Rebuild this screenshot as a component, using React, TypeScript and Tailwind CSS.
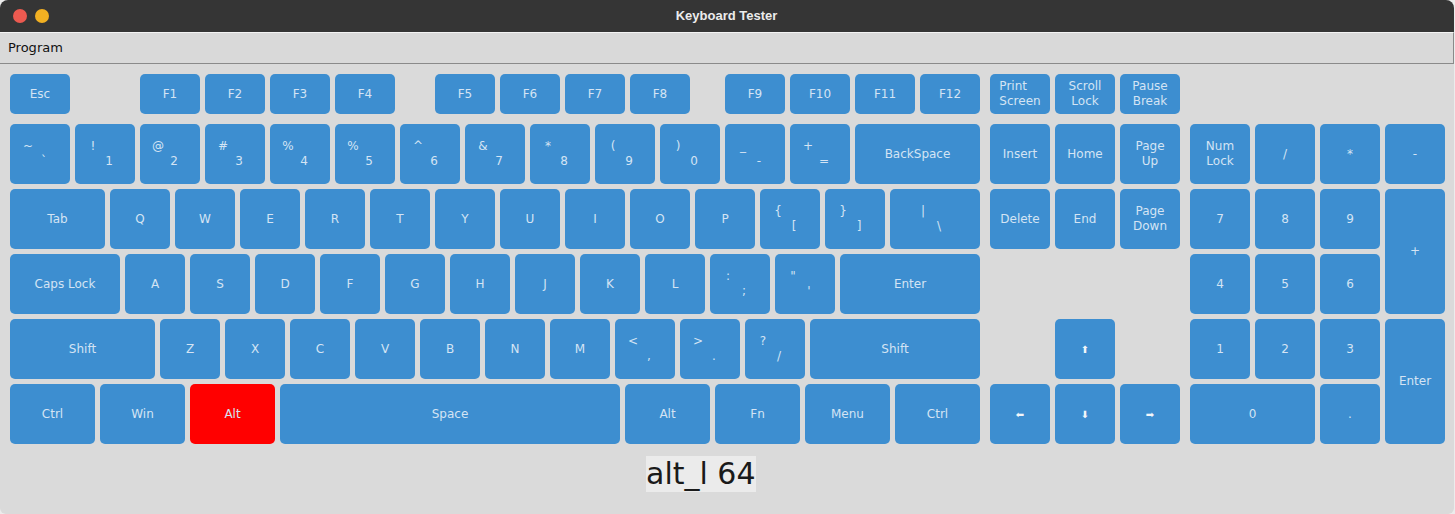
import React from "react";

type KP = { c?: string; red?: boolean; children?: React.ReactNode };

const K = ({ c = "w-[60px] h-[60px]", red, children }: KP) => (
  <div
    className={`${c} ${red ? "bg-[#ff0000]" : "bg-[#3d8ed0]"} shrink-0 rounded-[5px] flex items-center justify-center text-[12px] leading-[15px] text-[#d4e4f4] text-center`}
  >
    {children}
  </div>
);

const D = ({ a, b }: { a: string; b: string }) => (
  <div className="flex flex-col items-center">
    <span className="-translate-x-[12px] whitespace-pre">{a}</span>
    <span className="translate-x-[4px] whitespace-pre">{b}</span>
  </div>
);

const T = ({ a, b, left }: { a: string; b: string; left?: boolean }) => (
  <div className={`flex flex-col ${left ? "items-start" : "items-center"}`}>
    <span>{a}</span>
    <span>{b}</span>
  </div>
);

const Sp = ({ c }: { c: string }) => <div className={`${c} shrink-0`} />;

export default function App() {
  const letters1 = ["Q", "W", "E", "R", "T", "Y", "U", "I", "O", "P"];
  const letters2 = ["A", "S", "D", "F", "G", "H", "J", "K", "L"];
  const letters3 = ["Z", "X", "C", "V", "B", "N", "M"];
  const nums: [string, string][] = [
    ["~", "`"],
    ["!", "1"],
    ["@", "2"],
    ["#", "3"],
    ["%", "4"],
    ["%", "5"],
    ["^", "6"],
    ["&", "7"],
    ["*", "8"],
    ["(", "9"],
    [")", "0"],
    ["_", "-"],
    ["+", "="],
  ];
  return (
    <div className="w-[1455px] h-[514px] bg-[#ececec] font-['DejaVu_Sans',sans-serif] overflow-hidden">
      <div className="w-[1454px] h-[514px] flex flex-col rounded-t-[8px] rounded-b-[6px] overflow-hidden">
        {/* title bar */}
        <div className="h-[32px] bg-[#353535] flex items-center relative shrink-0">
          <div className="flex items-center gap-[8px] pl-[13px]">
            <div className="w-[14px] h-[14px] rounded-full bg-[#ec5a50]" />
            <div className="w-[14px] h-[14px] rounded-full bg-[#f1b022]" />
          </div>
          <div className="flex-1 text-center pr-[50px] font-['Liberation_Sans',sans-serif] font-bold text-[13px] text-[#ececec]">
            Keyboard Tester
          </div>
        </div>
        {/* menu bar */}
        <div className="h-[32px] shrink-0 bg-[#d9d9d9] border-t border-t-[#f4f4f4] border-b border-b-[#8a8a8a] border-r border-r-[#8a8a8a] flex items-center pl-[8px] text-[13px] text-[#111]">
          Program
        </div>
        {/* content */}
        <div className="flex-1 bg-[#dadada] pt-[10px] pl-[10px]">
          {/* function row */}
          <div className="flex gap-[5px] h-[40px]">
            <K c="w-[60px] h-[40px]">Esc</K>
            <Sp c="w-[60px]" />
            {["F1", "F2", "F3", "F4"].map((f) => (
              <K key={f} c="w-[60px] h-[40px]">{f}</K>
            ))}
            <Sp c="w-[30px]" />
            {["F5", "F6", "F7", "F8"].map((f) => (
              <K key={f} c="w-[60px] h-[40px]">{f}</K>
            ))}
            <Sp c="w-[25px]" />
            {["F9", "F10", "F11", "F12"].map((f) => (
              <K key={f} c="w-[60px] h-[40px]">{f}</K>
            ))}
            <Sp c="w-0" />
            <K c="w-[60px] h-[40px]">
              <T a="Print" b="Screen" left />
            </K>
            <K c="w-[60px] h-[40px]">
              <T a="Scroll" b="Lock" />
            </K>
            <K c="w-[60px] h-[40px]">
              <T a="Pause" b="Break" />
            </K>
          </div>

          <div className="flex gap-[10px] mt-[10px]">
            {/* main block */}
            <div className="w-[970px] flex flex-col gap-[5px] shrink-0">
              <div className="flex gap-[5px]">
                {nums.map(([a, b], i) => (
                  <K key={i}>
                    <D a={a} b={b} />
                  </K>
                ))}
                <K c="w-[125px] h-[60px]">BackSpace</K>
              </div>
              <div className="flex gap-[5px]">
                <K c="w-[95px] h-[60px]">Tab</K>
                {letters1.map((l) => (
                  <K key={l}>{l}</K>
                ))}
                <K>
                  <D a="{" b="[" />
                </K>
                <K>
                  <D a="}" b="]" />
                </K>
                <K c="w-[90px] h-[60px]">
                  <D a="|" b="\" />
                </K>
              </div>
              <div className="flex gap-[5px]">
                <K c="w-[110px] h-[60px]">Caps Lock</K>
                {letters2.map((l) => (
                  <K key={l}>{l}</K>
                ))}
                <K>
                  <D a=":" b=";" />
                </K>
                <K>
                  <D a={'"'} b="'" />
                </K>
                <K c="w-[140px] h-[60px]">Enter</K>
              </div>
              <div className="flex gap-[5px]">
                <K c="w-[145px] h-[60px]">Shift</K>
                {letters3.map((l) => (
                  <K key={l}>{l}</K>
                ))}
                <K>
                  <D a="<" b="," />
                </K>
                <K>
                  <D a=">" b="." />
                </K>
                <K>
                  <D a="?" b="/" />
                </K>
                <K c="w-[170px] h-[60px]">Shift</K>
              </div>
              <div className="flex gap-[5px]">
                <K c="w-[85px] h-[60px]">Ctrl</K>
                <K c="w-[85px] h-[60px]">Win</K>
                <K c="w-[85px] h-[60px]" red>
                  Alt
                </K>
                <K c="w-[340px] h-[60px]">Space</K>
                <K c="w-[85px] h-[60px]">Alt</K>
                <K c="w-[85px] h-[60px]">Fn</K>
                <K c="w-[85px] h-[60px]">Menu</K>
                <K c="w-[85px] h-[60px]">Ctrl</K>
              </div>
            </div>

            {/* nav block */}
            <div className="w-[190px] flex flex-col gap-[5px] shrink-0">
              <div className="flex gap-[5px]">
                <K>Insert</K>
                <K>Home</K>
                <K>
                  <T a="Page" b="Up" />
                </K>
              </div>
              <div className="flex gap-[5px]">
                <K>Delete</K>
                <K>End</K>
                <K>
                  <T a="Page" b="Down" />
                </K>
              </div>
              <div className="h-[60px]" />
              <div className="flex gap-[5px]">
                <Sp c="w-[60px]" />
                <K>
                  <span className="text-[10px] text-[#f2f6fa]">⬆</span>
                </K>
              </div>
              <div className="flex gap-[5px]">
                <K>
                  <span className="text-[10px] text-[#f2f6fa]">⬅</span>
                </K>
                <K>
                  <span className="text-[10px] text-[#f2f6fa]">⬇</span>
                </K>
                <K>
                  <span className="text-[10px] text-[#f2f6fa]">➡</span>
                </K>
              </div>
            </div>

            {/* numpad */}
            <div className="grid grid-cols-[repeat(4,60px)] grid-rows-[repeat(5,60px)] gap-[5px] shrink-0">
              <K c="">
                <T a="Num" b="Lock" />
              </K>
              <K c="">/</K>
              <K c="">*</K>
              <K c="">-</K>
              <K c="">7</K>
              <K c="">8</K>
              <K c="">9</K>
              <K c="row-span-2">+</K>
              <K c="">4</K>
              <K c="">5</K>
              <K c="">6</K>
              <K c="">1</K>
              <K c="">2</K>
              <K c="">3</K>
              <K c="row-span-2">Enter</K>
              <K c="col-span-2">0</K>
              <K c="">.</K>
            </div>
          </div>

          <div className="mt-[12px] ml-[636px]">
            <span className="inline-block bg-[#ebebeb] text-[30px] leading-[36px] text-[#1a1a1a]">
              alt_l 64
            </span>
          </div>
        </div>
      </div>
    </div>
  );
}
